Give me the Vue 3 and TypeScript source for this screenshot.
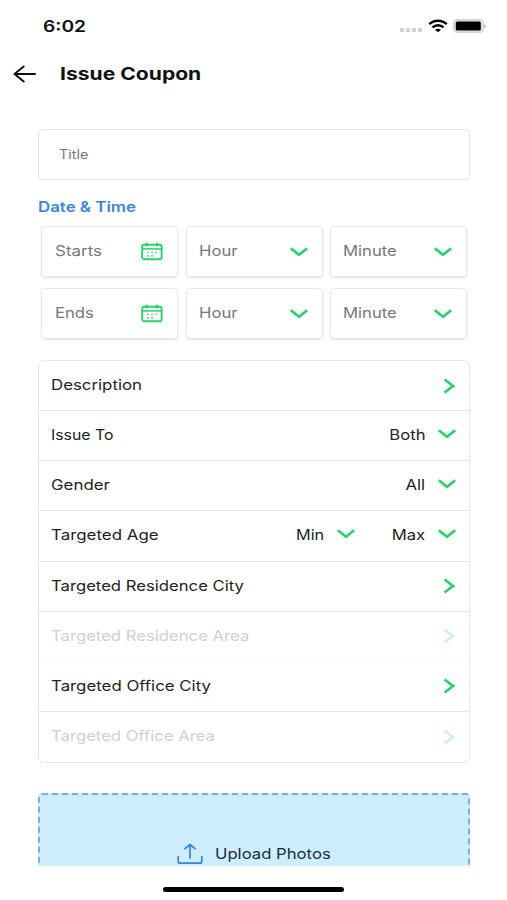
<script setup lang="ts">
interface Picker { label: string; name: string }
interface Row {
  label: string
  name: string
  kind: 'link' | 'select'
  values?: { text: string; name: string }[]
  disabled?: boolean
}

const dateRows: string[] = ['Starts', 'Ends']
const pickers: Picker[] = [
  { label: 'Hour', name: 'hour' },
  { label: 'Minute', name: 'minute' },
]
const rows: Row[] = [
  { label: 'Description', name: 'description', kind: 'link' },
  { label: 'Issue To', name: 'issue-to', kind: 'select', values: [{ text: 'Both', name: 'both' }] },
  { label: 'Gender', name: 'gender', kind: 'select', values: [{ text: 'All', name: 'all' }] },
  {
    label: 'Targeted Age',
    name: 'age',
    kind: 'select',
    values: [{ text: 'Min', name: 'min' }, { text: 'Max', name: 'max' }],
  },
  { label: 'Targeted Residence City', name: 'res-city', kind: 'link' },
  { label: 'Targeted Residence Area', name: 'res-area', kind: 'link', disabled: true },
  { label: 'Targeted Office City', name: 'office-city', kind: 'link' },
  { label: 'Targeted Office Area', name: 'office-area', kind: 'link', disabled: true },
]
</script>

<template>
  <div class="screen">
    <header class="status">
      <span class="t time">6:02</span>
      <div class="indicators">
        <div class="dots"><i v-for="n in 4" :key="n"></i></div>
        <svg class="wifi" width="20" height="14" viewBox="0 0 20 14">
          <path d="M1.300 5.100C6 .5 14 .5 18.700 5.100M4.500 8.300c3-2.900 8-2.900 11 0" fill="none" stroke="#000" stroke-width="2.500" />
          <path d="M7 10.800c1.700-1.500 4.300-1.500 6 0L10 13.300z" />
        </svg>
        <svg class="battery" width="34" height="14" viewBox="0 0 34 14">
          <rect x=".8" y=".8" width="29.400" height="12.600" rx="3.800" fill="#e4e4e4" stroke="#d2d2d2" stroke-width="1.600" />
          <rect x="2.800" y="2.600" width="25" height="9" rx="1.500" />
          <path d="M31.400 5.200c2 .6 2 3.200 0 3.800z" fill="#aaa" />
        </svg>
      </div>
    </header>

    <nav class="bar">
      <svg width="24" height="18" viewBox="0 0 24 18" fill="none" stroke="#111" stroke-width="2" stroke-linecap="round" stroke-linejoin="round">
        <path d="M22 9H1.500M10.700 1.500L1.500 9l9.200 7.500" />
      </svg>
      <h1 class="t heading">Issue Coupon</h1>
    </nav>

    <main class="content">
      <div class="title-field"><span class="t placeholder">Title</span></div>
      <h2 class="t section">Date &amp; Time</h2>

      <div class="dates">
        <template v-for="d in dateRows" :key="d">
          <div class="box">
            <span class="t" :class="d.toLowerCase()">{{ d }}</span>
            <svg class="calendar" width="22" height="19" viewBox="0 0 22 19" fill="none" stroke="#2bd06c">
              <rect x="1.200" y="2.700" width="19.400" height="14.500" rx="1.800" stroke-width="1.900" />
              <path d="M1.200 6.900h19.400" stroke-width="1.500" />
              <path d="M5.700.8v3.700M16.100.8v3.700" stroke-width="2.200" />
              <path d="M6 10.500h2M10 10.500h2M14 10.500h2M6 13.800h2M10 13.800h2" stroke-width="1.700" opacity=".75" />
            </svg>
          </div>
          <div v-for="p in pickers" :key="p.name" class="box">
            <span class="t" :class="p.name">{{ p.label }}</span>
            <svg class="down" width="20" height="12" viewBox="0 0 20 12"><path d="M1.800 2.200L10 8.800l8.200-6.600" /></svg>
          </div>
        </template>
      </div>

      <section class="list">
        <div v-for="r in rows" :key="r.name" class="row" :class="{ disabled: r.disabled }">
          <span class="t" :class="r.name">{{ r.label }}</span>
          <svg v-if="r.kind === 'link'" class="next" width="14" height="18" viewBox="0 0 14 18"><path d="M2.500 2.500L11 9l-8.500 6.500" /></svg>
          <div v-else class="values">
            <div v-for="v in r.values" :key="v.name" class="value">
              <span class="t end" :class="v.name">{{ v.text }}</span>
              <svg class="down" width="20" height="12" viewBox="0 0 20 12"><path d="M1.800 2.200L10 8.800l8.200-6.600" /></svg>
            </div>
          </div>
        </div>
      </section>

      <div class="upload">
        <svg width="26" height="22" viewBox="0 0 26 22" fill="none" stroke="#3b82e6" stroke-width="1.700" stroke-linecap="round" stroke-linejoin="round">
          <path d="M1.200 13.500v4.700q0 2 2 2h19.600q2 0 2-2v-4.700M13 15V1.500M7.800 5.700L13 1.500l5.200 4.200" />
        </svg>
        <span class="t photos">Upload Photos</span>
      </div>
    </main>

    <footer class="home"><div class="indicator"></div></footer>
  </div>
</template>

<style>
body { margin: 0; background: #fff; }
</style>

<style scoped>
.screen {
  width: 507px;
  height: 900px;
  overflow: hidden;
  display: flex;
  flex-direction: column;
  background: #fff;
  color: #242424;
  font: 400 14.500px/20px Inter, "Liberation Sans", sans-serif;
}
svg { display: block; flex: none; }
.t {
  display: block;
  margin: 0;
  white-space: nowrap;
  transform: scaleX(1.150);
  transform-origin: left center;
}
.end { transform-origin: right center; }

.status { height: 52px; box-sizing: border-box; padding: 16px 20px 0 43px; display: flex; justify-content: space-between; align-items: flex-start; }
.time { font-size: 16px; font-weight: 600; color: #111; transform: scaleX(1.200); }
.indicators { display: flex; align-items: center; padding-top: 3px; }
.dots { display: flex; gap: 2px; margin: 8px 6px 0 0; }
.dots i { width: 4px; height: 4px; border-radius: 1px; background: #cecece; }
.wifi { margin-right: 5px; }

.bar { height: 44px; display: flex; align-items: center; padding-left: 13px; gap: 23px; color: #111; }
.heading { font-size: 17.500px; font-weight: 700; line-height: 24px; transform: scaleX(1.205); }

.content { height: 770px; box-sizing: border-box; padding: 33px 37px 0 38px; overflow: hidden; }
.title-field { height: 51px; box-sizing: border-box; border: 1px solid #e4e4e4; border-radius: 4px; padding: 0 20px; display: flex; align-items: center; }
.placeholder { font-size: 12.500px; color: #777; }
.section { font-size: 14.500px; font-weight: 600; color: #3984e4; margin-top: 17px; transform: scaleX(1.163); }

.dates { display: grid; grid-template-columns: repeat(3, 137px); gap: 11px 7.500px; margin: 9px 0 0 3px; }
.box { height: 51px; box-sizing: border-box; border: 1px solid #e8e8e8; border-radius: 4px; box-shadow: 0 1px 2px #00000020; padding: 0 13px 0 12px; display: flex; align-items: center; justify-content: space-between; color: #777; }
.box .t { margin-top: -2px; }
.box .starts, .box .ends { margin-left: 1px; }
.starts { transform: scaleX(1.170); }
.calendar { margin-right: 1px; }
.down path, .next path { fill: none; stroke: #2bd06c; stroke-width: 2.700; }

.list { height: 403px; box-sizing: border-box; margin-top: 21px; border: 1px solid #e6e6e6; border-radius: 6px; display: grid; grid-template-rows: repeat(8, 1fr); }
.row { display: flex; align-items: center; justify-content: space-between; padding: 0 13px 0 12px; border-bottom: 1px solid #e6e6e6; }
.row > .t { margin-top: -1px; }
.description { transform: scaleX(1.160); }
.issue-to { transform: scaleX(1.090); }
.gender { transform: scaleX(1.165); }
.age { transform: scaleX(1.165); }
.office-city { transform: scaleX(1.160); }
.row:last-child { border-bottom: 0; }
.disabled { color: #d0d0d0; border-bottom-color: #fafafa; }
.disabled .next { opacity: .22; }
.values { display: flex; gap: 41px; }
.value { display: flex; align-items: center; gap: 12px; }
.value .down { margin: -4px -1px 0 0; }
.value .t { margin-top: -1px; }
.min { transform: scaleX(1.120); }

.upload { height: 120px; box-sizing: border-box; margin-top: 30px; border: 2px dashed #79adf0; border-radius: 4px; background: #cceeff; display: flex; align-items: center; justify-content: flex-start; padding: 1px 0 0 137px; gap: 11.500px; color: #1c2d38; }

.home { flex: 1; display: flex; justify-content: center; padding-top: 21px; }
.indicator { width: 181px; height: 5px; border-radius: 3px; background: #000; }
</style>
